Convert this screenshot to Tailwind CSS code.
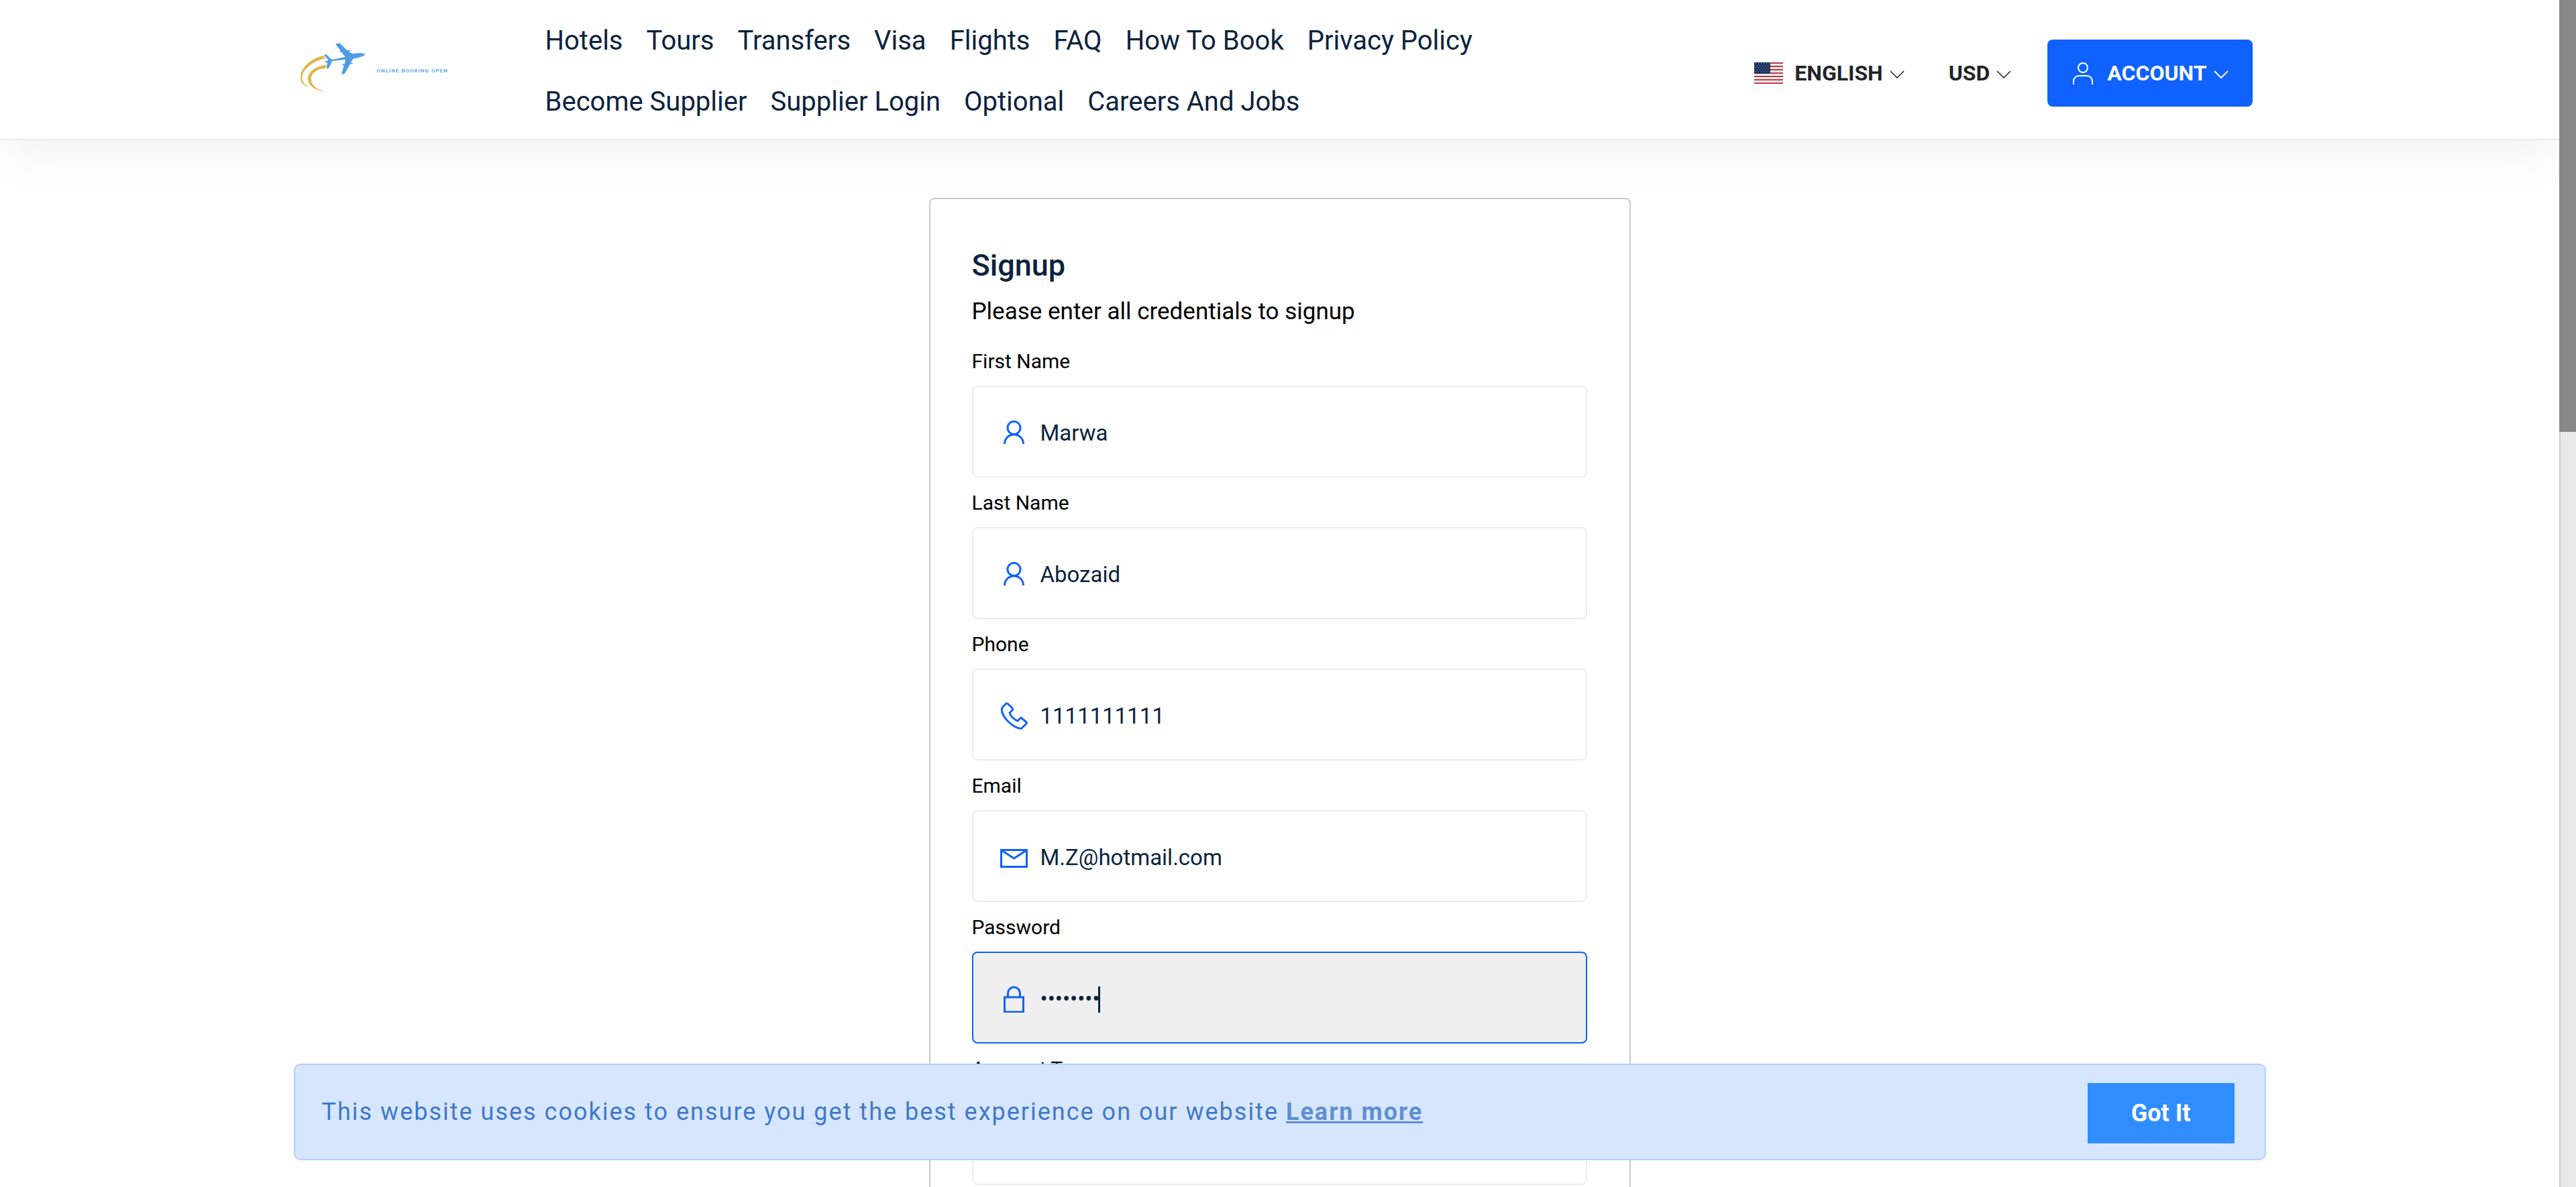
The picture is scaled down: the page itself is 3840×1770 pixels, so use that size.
<!DOCTYPE html>
<html lang="en">
<head>
<meta charset="utf-8">
<title>Signup</title>
<script src="https://cdn.jsdelivr.net/npm/@tailwindcss/browser@4"></script>
</head>
<body class="flex h-screen overflow-hidden bg-white font-['Roboto',sans-serif] text-[#0d233e]">
<div class="min-w-0 flex-1 overflow-hidden">
  <header class="border-b-2 border-[#ededed] bg-white shadow-[0_16px_80px_rgba(0,0,0,0.06)]">
    <div class="mx-auto flex h-[207px] max-w-[2940px] items-center pr-5">
      <a href="#" class="flex w-[375px] shrink-0 items-center pb-1 pl-2" aria-label="Online Booking Open">
        <svg class="h-[80px] w-[100px]" viewBox="78 65 300 240" aria-hidden="true">
          <path d="M188 127C130 140 84 180 84 226c0 24 16 38 38 42-18-8-30-20-31-40 0-38 48-76 104-88z" fill="#e3b44b"/>
          <path d="M199 170c-50 4-82 32-82 62 0 30 36 52 74 56-34-10-60-28-60-56 0-26 28-46 64-47z" fill="#e3b44b"/>
          <path d="M240 75L259 72L293 105L304 102L307 106L299 110L316 119C340 116 370 116 372 122C372 130 342 138 319 142L308 160L318 160L317 164L305 167L283 207L266 213L279 171L272 172L271 167L281 165L285 145L226 152L210 184L200 186L204 159L187 155L207 150L207 145L189 124L199 122L224 146L284 134L265 111L256 108L263 106Z" fill="#4f9ce6"/>
        </svg>
        <span class="pt-2 pl-4 text-[8px] font-medium tracking-[1px] whitespace-nowrap text-[#4f9ce6]">ONLINE BOOKING OPEN</span>
      </a>
      <nav class="flex flex-1 flex-wrap gap-x-[35px] pt-1 pr-[160px] text-[40px] leading-[91px]">
        <a href="#">Hotels</a>
        <a href="#">Tours</a>
        <a href="#">Transfers</a>
        <a href="#">Visa</a>
        <a href="#">Flights</a>
        <a href="#">FAQ</a>
        <a href="#">How To Book</a>
        <a href="#">Privacy Policy</a>
        <a href="#">Become Supplier</a>
        <a href="#">Supplier Login</a>
        <a href="#">Optional</a>
        <a href="#">Careers And Jobs</a>
      </nav>
      <div class="mt-[10px] flex shrink-0 items-center text-[32px] font-bold text-[#212529]">
        <button type="button" class="mr-[66px] flex items-center">
          <svg class="mr-[17px] h-8 w-[43px]" viewBox="0 0 43 32" aria-hidden="true">
            <path d="M0 0h43v32H0z" fill="#f3edee"/>
            <path d="M0 1h43M0 6h43M0 11h43M0 16h43M0 21h43M0 26h43M0 31h43" stroke="#bd3d44" stroke-width="2"/>
            <path d="M0 0h24v17H0z" fill="#192f5d"/>
            <path d="M2 2h22M4 5h20M2 8h22M4 11h20M2 14h22" stroke="#c9d0de" stroke-width="1" stroke-dasharray="1 3"/>
          </svg>
          ENGLISH
          <svg class="mt-1 ml-[10px] h-3 w-[22px]" viewBox="0 0 22 12" fill="none" stroke="currentColor" stroke-width="1.500" aria-hidden="true"><path d="M1 1l10 10L21 1"/></svg>
        </button>
        <button type="button" class="mr-[54px] flex items-center">
          USD
          <svg class="mt-1 ml-[10px] h-3 w-[22px]" viewBox="0 0 22 12" fill="none" stroke="currentColor" stroke-width="1.500" aria-hidden="true"><path d="M1 1l10 10L21 1"/></svg>
        </button>
        <button type="button" class="flex h-[100px] items-center rounded-lg bg-[#0f62fe] pr-9 pl-[38px] text-white">
          <svg class="mr-[21px] h-[34px] w-[30px]" viewBox="0 0 30 34" fill="none" stroke="currentColor" stroke-width="2" aria-hidden="true"><circle cx="15" cy="9" r="7"/><path d="M1 34v-5a8 8 0 0 1 8-8h12a8 8 0 0 1 8 8v5"/></svg>
          ACCOUNT
          <svg class="mt-1 ml-[10px] h-3 w-[22px]" viewBox="0 0 22 12" fill="none" stroke="currentColor" stroke-width="2" aria-hidden="true"><path d="M1 1l10 10L21 1"/></svg>
        </button>
      </div>
    </div>
  </header>

  <main class="px-10 pt-[86px]">
    <form class="mx-auto max-w-[1046px] rounded-lg border-2 border-[#cacaca] pt-[73px] pr-[63px] pb-16 pl-[62px]">
      <h1 class="text-[45px] leading-[52px] font-medium">Signup</h1>
      <p class="mt-[18px] mb-[27px] text-[35px] leading-[50px] text-black">Please enter all credentials to signup</p>
      <div class="flex flex-col gap-4">
        <div>
          <label for="first" class="mb-[14px] block text-[30px] leading-[44px] text-black">First Name</label>
          <div class="relative">
            <input id="first" type="text" value="Marwa" class="block h-[137px] w-full rounded-lg border-2 border-[#ededed] pt-1 pr-10 pl-[100px] text-[33px] outline-none">
            <svg class="absolute top-[48px] left-[42px] h-[41px] w-[41px]" viewBox="0 0 41 41" fill="none" stroke="#0f62fe" stroke-width="3" aria-hidden="true"><circle cx="20.500" cy="15" r="9.500"/><path d="M6.500 39c0-8 6-14 14-14s14 6 14 14"/></svg>
          </div>
        </div>
        <div>
          <label for="last" class="mb-[14px] block text-[30px] leading-[44px] text-black">Last Name</label>
          <div class="relative">
            <input id="last" type="text" value="Abozaid" class="block h-[137px] w-full rounded-lg border-2 border-[#ededed] pt-1 pr-10 pl-[100px] text-[33px] outline-none">
            <svg class="absolute top-[48px] left-[42px] h-[41px] w-[41px]" viewBox="0 0 41 41" fill="none" stroke="#0f62fe" stroke-width="3" aria-hidden="true"><circle cx="20.500" cy="15" r="9.500"/><path d="M6.500 39c0-8 6-14 14-14s14 6 14 14"/></svg>
          </div>
        </div>
        <div>
          <label for="phone" class="mb-[14px] block text-[30px] leading-[44px] text-black">Phone</label>
          <div class="relative">
            <input id="phone" type="tel" value="1111111111" class="block h-[137px] w-full rounded-lg border-2 border-[#ededed] pt-1 pr-10 pl-[100px] text-[33px] outline-none">
            <svg class="absolute top-[50px] left-[42px] h-[41px] w-[41px]" viewBox="0 0 41 41" fill="none" stroke="#0f62fe" stroke-width="3" stroke-linejoin="round" aria-hidden="true"><path d="M9 2L3 8c-2 6 2 14 9 21s15 11 20 10l7-7c1-1 0-2-1-3l-7-6-5 5c-5-2-10-7-12-12l4-4c1-1 1-2 0-3l-7-7z"/></svg>
          </div>
        </div>
        <div>
          <label for="email" class="mb-[14px] block text-[30px] leading-[44px] text-black">Email</label>
          <div class="relative">
            <input id="email" type="email" value="M.Z@hotmail.com" class="block h-[137px] w-full rounded-lg border-2 border-[#ededed] pt-1 pr-10 pl-[100px] text-[33px] outline-none">
            <svg class="absolute top-[50px] left-[42px] h-[41px] w-[41px]" viewBox="0 0 41 41" fill="none" stroke="#0f62fe" stroke-width="3" aria-hidden="true"><path d="M1.500 9.500h38v25h-38zM2 10l18.500 12L39 10"/></svg>
          </div>
        </div>
        <div>
          <label for="password" class="mb-[14px] block text-[30px] leading-[44px] text-black">Password</label>
          <div class="relative">
            <input id="password" type="password" value="password" class="block h-[137px] w-full rounded-lg border-2 border-[#0f62fe] bg-[#efefef] pt-1 pr-10 pl-[100px] text-[33px] outline-none">
            <svg class="absolute top-[50px] left-[42px] h-[41px] w-[41px]" viewBox="0 0 41 41" fill="none" stroke="#0f62fe" stroke-width="3" aria-hidden="true"><path d="M6.500 18h28v22h-28zM11.500 18v-6a9 9 0 0 1 18 0v6"/></svg>
            <span class="absolute top-[52px] left-[188px] h-[39px] w-[3px] bg-[#0d233e]"></span>
          </div>
        </div>
        <div>
          <label for="type" class="mb-[14px] block text-[30px] leading-[44px] text-black">Account Type</label>
          <select id="type" class="block h-[137px] w-full appearance-none rounded-lg border-2 border-[#ededed] px-10 text-[33px]"><option></option></select>
        </div>
      </div>
    </form>
  </main>
</div>

<div class="w-[25px] shrink-0 border-l-2 border-[#c9c9c9] bg-[#e9e9e9]" aria-hidden="true">
  <div class="-ml-[2px] h-[644px] bg-[#888888]"></div>
</div>

<div class="fixed right-[25px] bottom-10 left-0 px-10">
  <div role="dialog" aria-label="Cookie notice" class="mx-auto flex h-[144px] max-w-[2940px] items-center justify-between rounded-[10px] border-2 border-[#b0d0ff] bg-[#d7e6ff] pr-[45px] pl-10">
    <p class="text-[36px] tracking-[2px] text-[#4079c9]">This website uses cookies to ensure you get the best experience on our website <a href="#" class="font-bold text-[#5e8fd1] underline">Learn more</a></p>
    <button type="button" class="mt-1 h-[90px] w-[219px] bg-[#2f8dff] text-[36px] font-bold text-white">Got It</button>
  </div>
</div>
</body>
</html>
